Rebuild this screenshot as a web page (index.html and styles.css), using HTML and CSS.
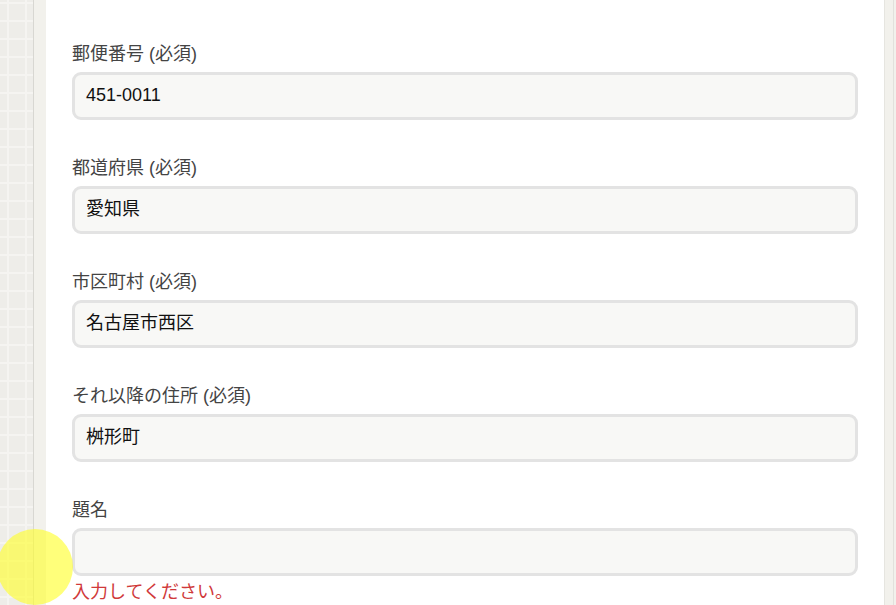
FILE: index.html
```html
<!DOCTYPE html>
<html lang="ja">
<head>
<meta charset="utf-8">
<link rel="stylesheet" href="styles.css">
</head>
<body>
<div class="page">
  <div class="grid-bg"></div>
  <div class="rail"></div>
  <main class="card">
    <div class="field">
      <label class="label">郵便番号 (必須)</label>
      <div class="input">451-0011</div>
    </div>
    <div class="field">
      <label class="label">都道府県 (必須)</label>
      <div class="input">愛知県</div>
    </div>
    <div class="field">
      <label class="label">市区町村 (必須)</label>
      <div class="input">名古屋市西区</div>
    </div>
    <div class="field">
      <label class="label">それ以降の住所 (必須)</label>
      <div class="input">桝形町</div>
    </div>
    <div class="field">
      <label class="label">題名</label>
      <div class="input"></div>
      <div class="error">入力してください。</div>
    </div>
  </main>
  <div class="rail-right"></div>
</div>
<div class="cursor"></div>
</body>
</html>
```

FILE: styles.css
```css
html, body {
  margin: 0;
  padding: 0;
  height: 605px;
  overflow: hidden;
}
body {
  font-family: "Liberation Sans", "Noto Sans CJK JP", sans-serif;
  background: #fff;
}
.page {
  display: flex;
  height: 605px;
}
.grid-bg {
  width: 33px;
  flex: none;
  background-color: #eeede9;
  background-image:
    repeating-linear-gradient(90deg, transparent 0 7px, #f5f4f1 7px 9px, transparent 9px 18px),
    repeating-linear-gradient(0deg, transparent 0 7px, #f5f4f1 7px 9px, transparent 9px 18px);
  border-right: 1px solid #d8d7d2;
}
.rail {
  width: 12px;
  flex: none;
  background: #f2f1ec;
}
.card {
  flex: 1;
  background: #fff;
  padding: 41px 26px 0 26px;
}
.rail-right {
  width: 12px;
  flex: none;
  background: #f2f1ec;
  border-left: 1px solid #e6e5e0;
  box-sizing: border-box;
  position: relative;
}
.rail-right::after {
  content: "";
  position: absolute;
  top: 0;
  bottom: 0;
  left: 8px;
  width: 1px;
  background: #e2e1dc;
}
.field {
  margin-bottom: 35px;
}
.label {
  display: block;
  font-size: 18px;
  line-height: 27px;
  color: #444;
  margin-bottom: 4px;
}
.input {
  height: 48px;
  box-sizing: border-box;
  border: 3px solid #e3e3e3;
  border-radius: 9px;
  background: #f8f8f6;
  padding: 0 11px;
  font-size: 18px;
  line-height: 41px;
  color: #111;
}
.error {
  font-size: 18px;
  line-height: 27px;
  color: #d0393a;
  margin-top: 3px;
}
.cursor {
  position: absolute;
  left: -3px;
  top: 529px;
  width: 76px;
  height: 76px;
  border-radius: 50%;
  background: rgba(255, 255, 40, 0.62);
}
```
